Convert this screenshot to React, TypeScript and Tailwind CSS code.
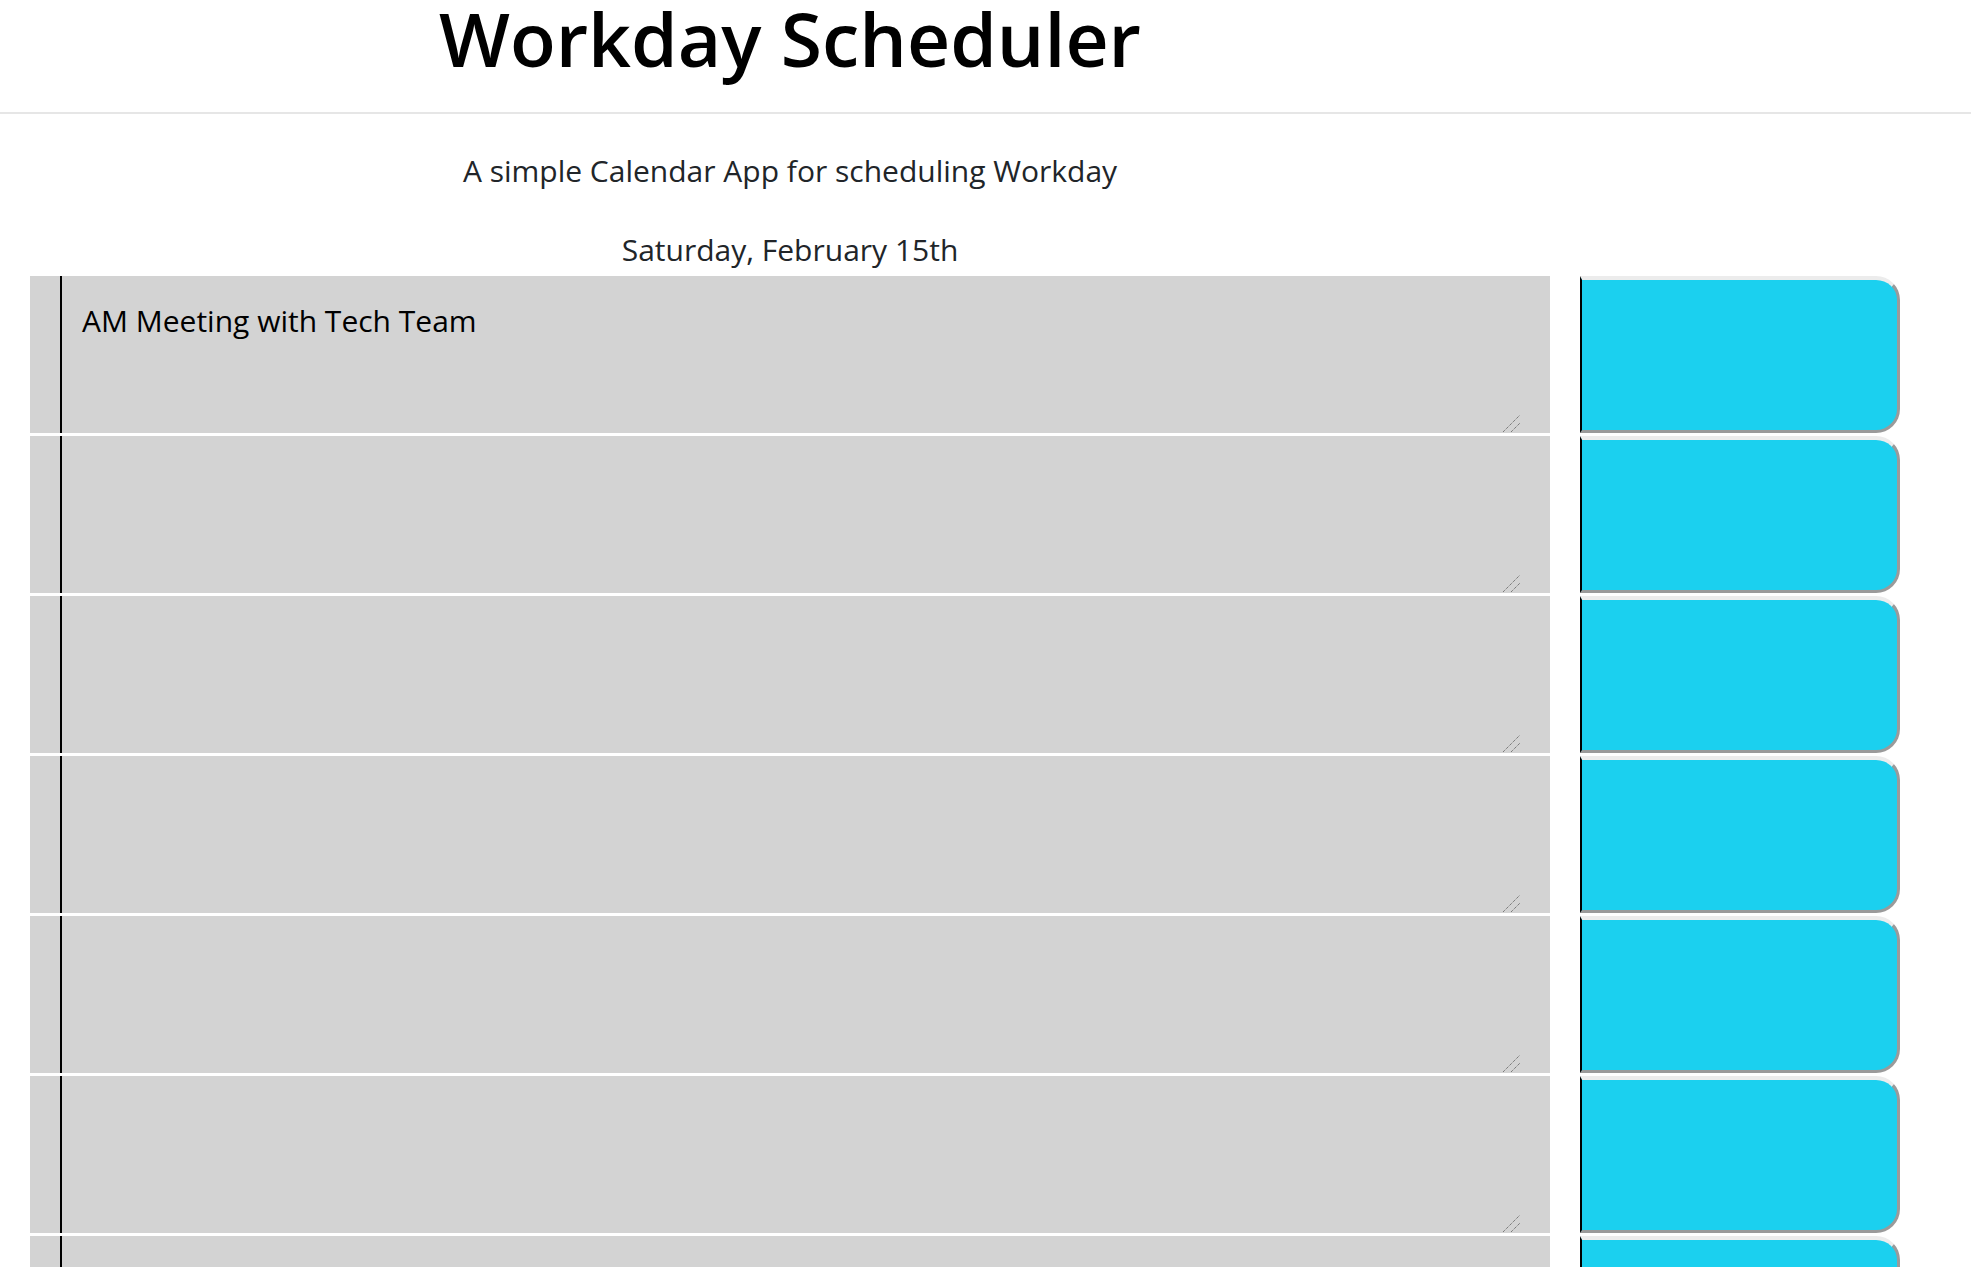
import { useState } from 'react';

const hours = [9, 10, 11, 12, 13, 14, 15, 16, 17];

function ResizeGrip() {
  return (
    <svg
      className="pointer-events-none absolute -right-[2px] bottom-0"
      width="20"
      height="18"
      viewBox="0 0 20 18"
    >
      <line x1="1" y1="17" x2="18" y2="0" stroke="#555" strokeWidth="1" strokeDasharray="1 1" />
      <line x1="9" y1="17" x2="18" y2="8" stroke="#555" strokeWidth="1" strokeDasharray="1 1" />
    </svg>
  );
}

export default function App() {
  const [notes, setNotes] = useState<Record<number, string>>({
    9: 'AM Meeting with Tech Team',
  });

  return (
    <div className="min-h-screen bg-white font-['Open_Sans',sans-serif] text-[#212529]">
      <header className="border-b-2 border-[#e6e6e6]">
        <div className="ml-[30px] w-[1520px] text-center">
          <h1 className="-mt-[7px] pb-[29px] text-[75px] leading-[1.2] font-semibold text-black">
            Workday Scheduler
          </h1>
        </div>
      </header>

      <div className="ml-[30px] w-[1520px] text-center text-[30px] leading-[1.2]">
        <p className="mt-[39px]">A simple Calendar App for scheduling Workday</p>
        <p className="mt-[43px]">Saturday, February 15th</p>
      </div>

      <div className="mt-[8px] flex flex-col gap-[3px] pl-[30px]">
        {hours.map((h) => (
          <div key={h} className="flex h-[157px]">
            <div className="flex w-[1520px] bg-[#d3d3d3]">
              <div className="w-[30px] shrink-0" />
              <div className="relative h-full w-[1460px]">
                <textarea
                  value={notes[h] || ''}
                  onChange={(e) => setNotes({ ...notes, [h]: e.target.value })}
                  className="block h-full w-full resize-none border-l-2 border-black bg-transparent px-[20px] pt-[25px] text-[30px] leading-[1.3] text-black outline-none font-['Open_Sans',sans-serif]"
                />
                <ResizeGrip />
              </div>
            </div>
            <button
              type="button"
              className="ml-[30px] h-full w-[320px] rounded-tr-[24px] rounded-br-[24px] border-t-[4px] border-r-[3px] border-b-[3px] border-l-2 border-t-[#ececec] border-r-[#9a9a9a] border-b-[#9a9a9a] border-l-black bg-[#1bd0ef]"
            />
          </div>
        ))}
      </div>
    </div>
  );
}
